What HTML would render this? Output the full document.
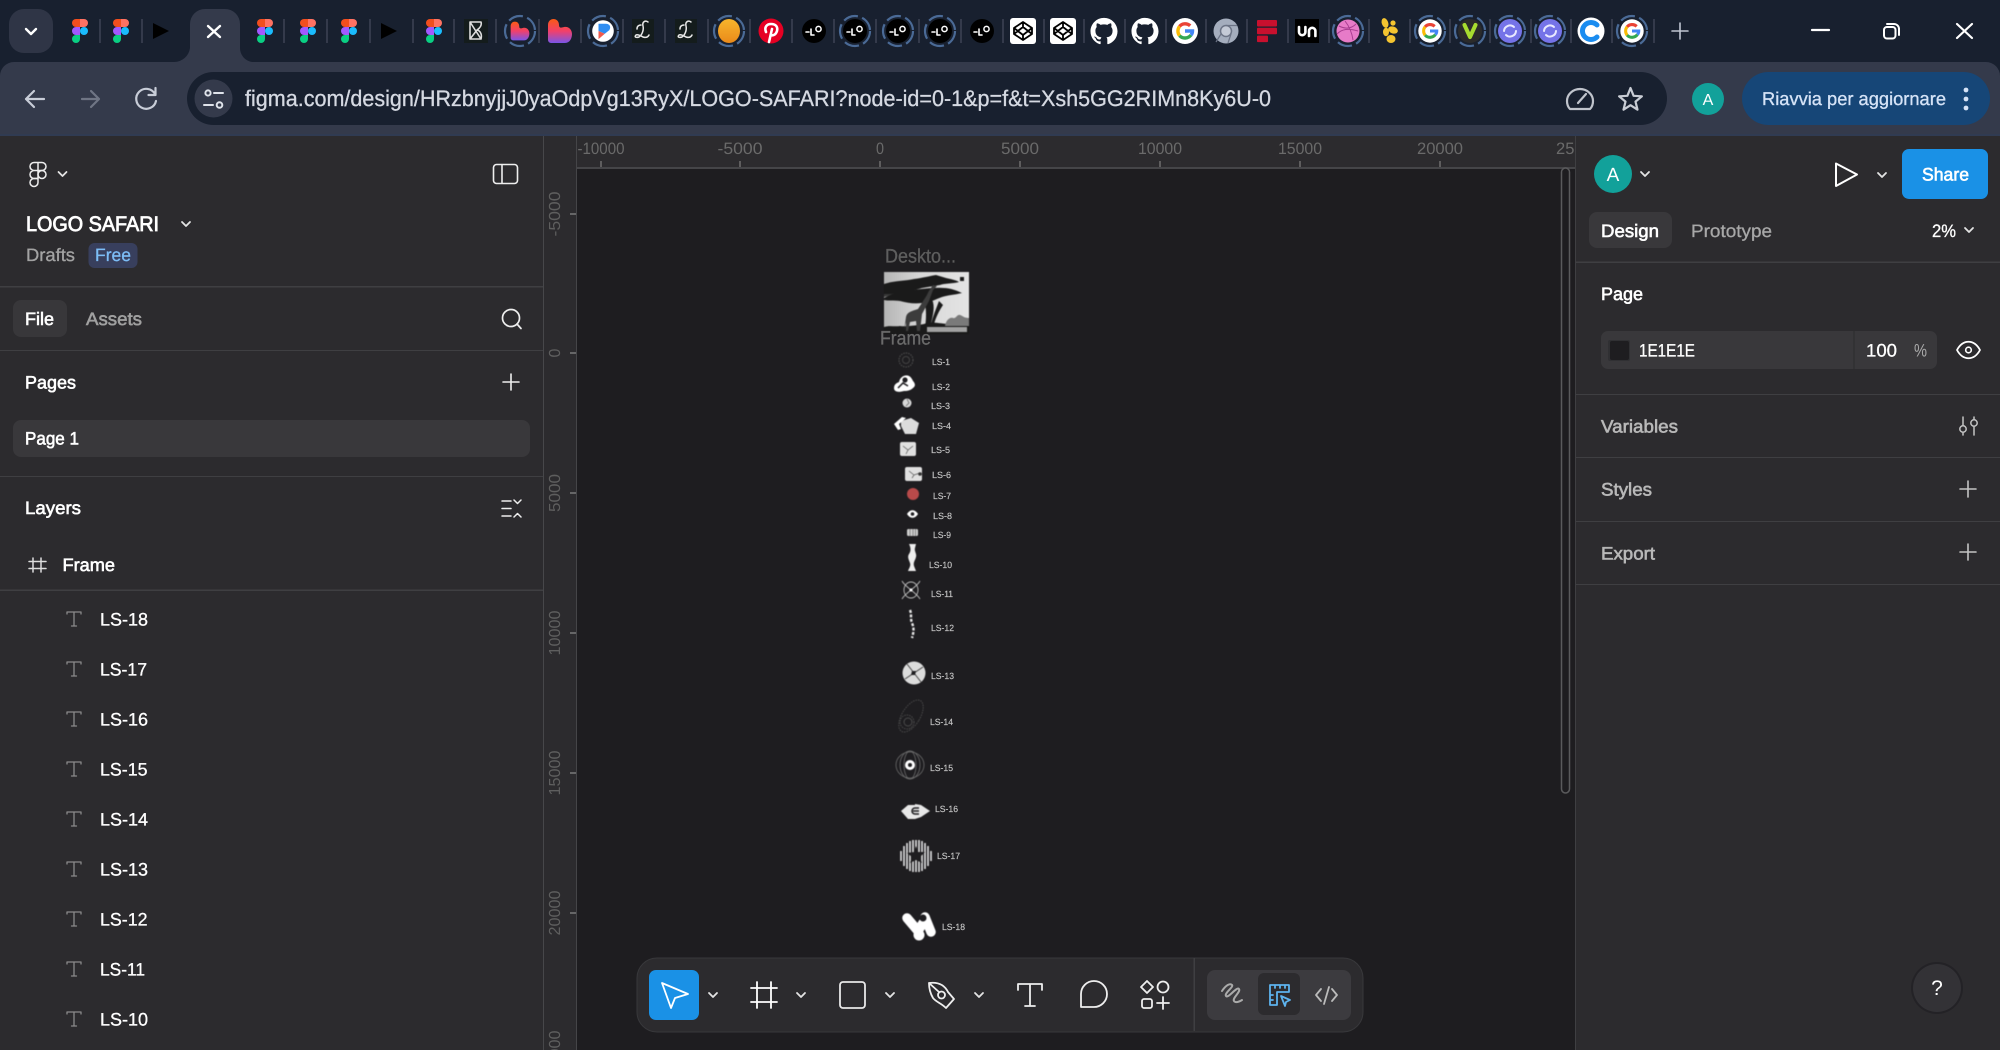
<!DOCTYPE html>
<html lang="en"><head><meta charset="utf-8"><title>LOGO SAFARI – Figma</title>
<style>
html,body{margin:0;padding:0;background:#1e1d20;width:2000px;height:1050px;overflow:hidden}
svg{display:block;font-family:"Liberation Sans",sans-serif;text-rendering:geometricPrecision}
.m{stroke:currentColor;stroke-width:.6px}
.n{stroke:currentColor;stroke-width:.3px}
.l{fill:none;stroke-linecap:round;stroke-linejoin:round}
.art{filter:blur(.45px)}
</style></head><body>
<svg xmlns="http://www.w3.org/2000/svg" width="2000" height="1050" viewBox="0 0 2000 1050">
<defs>
<linearGradient id="hg" x1="0" y1="0" x2="0" y2="1"><stop offset="0" stop-color="#fa5a14"/><stop offset=".5" stop-color="#f2406a"/><stop offset="1" stop-color="#7a55e8"/></linearGradient>
<linearGradient id="og" x1="0" y1="0" x2="0" y2="1"><stop offset="0" stop-color="#f7b52c"/><stop offset="1" stop-color="#ea8a1a"/></linearGradient>
<linearGradient id="ph" x1="0" y1="0" x2="1" y2="0"><stop offset="0" stop-color="#b5b5b5"/><stop offset=".45" stop-color="#d9d9d9"/><stop offset="1" stop-color="#e4e4e4"/></linearGradient>
<g id="fig"><path fill="#f24e1e" d="M0-12h-4a4 4 0 0 0 0 8h4z"/><path fill="#ff7262" d="M0-12h4a4 4 0 0 1 0 8H0z"/><path fill="#a259ff" d="M0-4h-4a4 4 0 0 0 0 8h4z"/><circle cx="4" fill="#1abcfe" r="4"/><path fill="#0acf83" d="M-4 4h4v4a4 4 0 1 1-4-4z"/></g>
<polygon id="play" points="-8,-8 8,0 -8,8" fill="#000"/>
<circle id="ring" r="15" fill="none" stroke="#4a6a96" stroke-width="2.2" stroke-dasharray="15 4.5"/>
<g id="bd"><rect x="-12" y="-12" width="24" height="24" fill="#141c1c"/><path class="l" stroke="#ddd" stroke-width="1.6" d="M-6-9H5c1 3-1 6-4 8 4 1 5 5 4 9H-6zM-6-9l11 17M-6 8L1-1"/></g>
<path id="heart" fill="url(#hg)" d="M-12 9V-6c0-8 11-8 11 0 0 3 2 3 5 2 5-1 8 3 8 7 0 4-2 9-7 9H-9a3 3 0 0 1-3-3z"/>
<g id="rb"><circle r="12" fill="#fff"/><path fill="#2e8df2" d="M-5-8h8c5 0 6 4 4 7L2 3l-7-3z"/><path fill="#ef5a4c" d="M-5 0l7 3-7 6z"/></g>
<g id="L"><rect x="-11" y="-12" width="22" height="24" fill="#141c1c"/><path class="l" stroke="#e8e8e8" stroke-width="1.500" d="M5-9c-3-2-6 0-5 4 1 4-1 9-4 11-3 1-5 0-3-2 2-1 5 1 7 2 3 1 5 0 6-2M-6-2c0-3 2-4 4-4"/></g>
<g id="pin"><circle r="12.500" fill="#e60023"/><path class="l" stroke="#fff" stroke-width="2.600" d="M-2 11l3-13M-5 1c-2-5 1-8 5-8 5 0 7 3 6 7-1 3-3 5-6 4"/></g>
<g id="lo"><circle r="12" fill="#000"/><path class="l" stroke="#fff" stroke-width="1.600" d="M-8 1h3M-3-2v6h3"/><circle cx="4.500" cy="-2" r="2.600" fill="none" stroke="#fff" stroke-width="1.500"/></g>
<g id="cp"><rect x="-13" y="-13" width="26" height="26" rx="3" fill="#fff"/><path class="l" stroke="#000" stroke-width="1.800" d="M0-9l9 6v6l-9 6-9-6v-6zM0-9v5M0 9V4M-9-3l9 7 9-7M-9 3l9-7 9 7"/></g>
<g id="gh"><path fill="#fff" transform="translate(-13.5 -13.5) scale(1.125)" d="M12 .297c-6.63 0-12 5.373-12 12 0 5.303 3.438 9.8 8.205 11.385.6.113.82-.258.82-.577 0-.285-.01-1.04-.015-2.04-3.338.724-4.042-1.61-4.042-1.61C4.422 18.07 3.633 17.7 3.633 17.7c-1.087-.744.084-.729.084-.729 1.205.084 1.838 1.236 1.838 1.236 1.07 1.835 2.809 1.305 3.495.998.108-.776.417-1.305.76-1.605-2.665-.3-5.466-1.332-5.466-5.93 0-1.31.465-2.38 1.235-3.22-.135-.303-.54-1.523.105-3.176 0 0 1.005-.322 3.3 1.23.96-.267 1.98-.399 3-.405 1.02.006 2.04.138 3 .405 2.28-1.552 3.285-1.23 3.285-1.23.645 1.653.24 2.873.12 3.176.765.84 1.23 1.91 1.23 3.22 0 4.61-2.805 5.625-5.475 5.92.42.36.81 1.096.81 2.22 0 1.606-.015 2.896-.015 3.286 0 .315.21.69.825.57C20.565 22.092 24 17.592 24 12.297c0-6.627-5.373-12-12-12"/></g>
<g id="g"><circle r="13" fill="#fff"/><g fill="none" stroke-width="3.400"><path stroke="#ea4335" d="M-5.500-4.600A7.500 7.500 0 0 1 5.200-5.200"/><path stroke="#fbbc05" d="M-5.500-4.600a7.500 7.500 0 0 0 0 9.200"/><path stroke="#34a853" d="M-5.500 4.600A7.500 7.500 0 0 0 6 4"/><path stroke="#4285f4" d="M6 4C7 3 7.500 1.500 7.500 0H0"/></g></g>
<g id="ch"><circle r="12.500" fill="#a4adbd"/><circle r="5.500" fill="#c4cad6" stroke="#6c7486" stroke-width="1.500"/><path stroke="#6c7486" stroke-width="1.200" fill="none" d="M0-5.500h11M-5 3l-5 8M5 3l-3 9"/></g>
<g id="fl" fill="#c8102e"><rect x="-10" y="-11" width="20" height="6.500" rx="1"/><rect x="-10" y="-3.200" width="20" height="6.500" rx="1"/><rect x="-10" y="4.600" width="11" height="6.500" rx="1"/></g>
<g id="un"><rect x="-12" y="-12" width="24" height="24" fill="#000"/><path class="l" stroke="#fff" stroke-width="2.600" d="M-8-4v5a3.200 3.200 0 0 0 6.400 0v-5M2 5v-5a3.200 3.200 0 0 1 6.400 0v5"/></g>
<g id="dr"><circle r="11.500" fill="#e77bc8"/><path fill="none" stroke="#a83d90" stroke-width="1" d="M-9-5c6 3 12 3 17-2M-3-10c4 5 7 12 8 19M-11 3c5-5 11-6 21-3"/></g>
<g id="ye" fill="#f4c430"><ellipse cx="-4" cy="-8" rx="3.200" ry="5" transform="rotate(-20 -4 -8)"/><ellipse cx="4" cy="-1" rx="5" ry="3.400" transform="rotate(20 4 -1)"/><ellipse cx="-3" cy="1" rx="3" ry="4.200"/><ellipse cx="2" cy="8" rx="4.500" ry="4"/><circle cx="4" cy="-8" r="2.600"/></g>
<g id="v"><circle r="12" fill="#2b2b2b"/><path class="l" stroke="#a7dc2f" stroke-width="4" d="M-5.500-6L0 6 5.500-6"/></g>
<g id="sy"><circle r="12" fill="#7573e8"/><path class="l" stroke="#e8e8ff" stroke-width="2" d="M-6 0a6 6 0 0 1 10-4M6 0a6 6 0 0 1-10 4"/></g>
<g id="cc"><circle r="13.500" fill="#fff"/><path class="l" stroke="#1a8cf0" stroke-width="5" d="M6-6a8.500 8.500 0 1 0 0 12"/></g>
<path id="chev" class="l" stroke="#e4e4e4" stroke-width="1.800" d="M-4-2l4 4 4-4"/>
<path id="tt" class="l" stroke="#8a8a8a" stroke-width="1.300" d="M-7-5v-2h14v2M0-7V7M-2.500 7h5"/>
<path id="pl" class="l" stroke-width="1.600" d="M-8 0H8M0-8V8"/>
</defs>

<!-- browser chrome -->
<rect width="2000" height="136" fill="#18202f"/>
<rect x="0" y="62" width="2000" height="90" rx="14" fill="#343a4b"/>
<rect x="9" y="9" width="44" height="44" rx="15" fill="#2f3546"/>
<path class="l" stroke="#fff" stroke-width="2.400" d="M26 29l5 5 5-5"/>
<path fill="#343a4b" d="M174 62a16 16 0 0 0 16-14V24a15 15 0 0 1 15-15h20a15 15 0 0 1 15 15v24a14 14 0 0 0 12 14z"/>
<path class="l" stroke="#fff" stroke-width="2.400" d="M208 26l12 11M220 26l-12 11"/>
<path stroke="#343a4b" stroke-width="2" fill="none" d="M100 19v24M142 19v24M284 19v24M327 19v24M370 19v24M413 19v24M454 19v24M496 19v24M539 19v24M581 19v24M623 19v24M665 19v24M708 19v24M750 19v24M792 19v24M834 19v24M876 19v24M919 19v24M961 19v24M1003 19v24M1044 19v24M1084 19v24M1125 19v24M1166 19v24M1206 19v24M1247 19v24M1288 19v24M1329 19v24M1369 19v24M1410 19v24M1450 19v24M1490 19v24M1531 19v24M1571 19v24M1612 19v24M1654 19v24"/>
<use href="#fig" x="80" y="31"/><use href="#fig" x="121" y="31"/><use href="#play" x="161" y="31"/>
<use href="#fig" x="265" y="31"/><use href="#fig" x="308" y="31"/><use href="#fig" x="349" y="31"/><use href="#play" x="389" y="31"/><use href="#fig" x="434" y="31"/>
<use href="#bd" x="476" y="31"/>
<g transform="translate(520 31) scale(.78)"><use href="#heart"/></g><use href="#ring" x="520" y="31"/>
<use href="#heart" x="560" y="31"/>
<g transform="translate(603 31) scale(.9)"><use href="#rb"/></g><use href="#ring" x="603" y="31"/>
<use href="#L" x="643" y="31"/><use href="#L" x="686" y="31"/>
<ellipse cx="729" cy="31" rx="11" ry="12" fill="url(#og)"/><use href="#ring" x="729" y="31"/>
<use href="#pin" x="771" y="31"/><use href="#lo" x="814" y="31"/>
<use href="#lo" x="855" y="31"/><use href="#ring" x="855" y="31"/>
<use href="#lo" x="898" y="31"/><use href="#ring" x="898" y="31"/>
<use href="#lo" x="940" y="31"/><use href="#ring" x="940" y="31"/>
<use href="#lo" x="982" y="31"/><use href="#cp" x="1023" y="31"/><use href="#cp" x="1063" y="31"/>
<use href="#gh" x="1104" y="31"/><use href="#gh" x="1145" y="31"/><use href="#g" x="1185" y="31"/><use href="#ch" x="1226" y="31"/>
<use href="#fl" x="1267" y="31"/><use href="#un" x="1307" y="31"/>
<use href="#dr" x="1348" y="31"/><use href="#ring" x="1348" y="31"/>
<use href="#ye" x="1389" y="31"/>
<g transform="translate(1430 31) scale(.9)"><use href="#g"/></g><use href="#ring" x="1430" y="31"/>
<use href="#v" x="1470" y="31"/><use href="#ring" x="1470" y="31"/>
<use href="#sy" x="1510" y="31"/><use href="#ring" x="1510" y="31"/>
<use href="#sy" x="1550" y="31"/><use href="#ring" x="1550" y="31"/>
<use href="#cc" x="1591" y="31"/>
<g transform="translate(1632 31) scale(.9)"><use href="#g"/></g><use href="#ring" x="1632" y="31"/>
<use href="#pl" x="1680" y="31" stroke="#c0c6d2"/>
<path class="l" stroke="#fff" stroke-width="2.200" d="M1812 30h17"/>
<g class="l" stroke="#fff" stroke-width="2"><rect x="1884" y="27" width="11.500" height="11.500" rx="3"/><path d="M1887 24h7a5 5 0 0 1 5 5v6"/></g>
<path class="l" stroke="#fff" stroke-width="2.200" d="M1957 24l15 14M1972 24l-15 14"/>

<path class="l" stroke="#c8cdd8" stroke-width="2.200" d="M44 99H26M34 91l-8 8 8 8"/>
<path class="l" stroke="#6f7584" stroke-width="2.200" d="M82 99h17M91 91l8 8-8 8"/>
<path class="l" stroke="#c8cdd8" stroke-width="2.200" d="M155 94a10 10 0 1 0 1 7M155.500 88v7h-7"/>
<rect x="187" y="72" width="1480" height="53" rx="26.500" fill="#18202f"/>
<circle cx="213.500" cy="98.500" r="19" fill="#343a4b"/>
<g class="l" stroke="#dfe3ea" stroke-width="2"><circle cx="208" cy="93" r="2.600"/><path d="M214 93h9M204 105h9"/><circle cx="219.500" cy="105" r="2.800"/></g>
<text x="245" y="106" font-size="22.500" fill="#d5d9e2" class="n" style="color:#d5d9e2" textLength="1026" lengthAdjust="spacingAndGlyphs">figma.com/design/HRzbnyjjJ0yaOdpVg13RyX/LOGO-SAFARI?node-id=0-1&amp;p=f&amp;t=Xsh5GG2RIMn8Ky6U-0</text>
<path class="l" stroke="#c0c4cc" stroke-width="2.200" d="M1570 109c-2-2-3-5-3-8a13 12 0 0 1 26 0c0 3-1 6-3 8zM1578 103l8-9"/>
<polygon class="l" stroke="#c8ccd4" stroke-width="2.200" points="1630.500,88 1633.600,95.800 1641.900,96.300 1635.500,101.600 1637.500,109.700 1630.500,105.200 1623.500,109.700 1625.500,101.600 1619.100,96.300 1627.400,95.800"/>
<circle cx="1708" cy="99" r="16" fill="#12a19a"/>
<text x="1708" y="105" font-size="16" fill="#fff" text-anchor="middle">A</text>
<rect x="1742" y="72" width="248" height="53" rx="26.500" fill="#164677"/>
<text x="1762" y="105" font-size="18.500" fill="#d5e3f7" class="n" style="color:#d5e3f7" textLength="184" lengthAdjust="spacingAndGlyphs">Riavvia per aggiornare</text>
<g fill="#d5e3f7"><circle cx="1966" cy="90" r="2.400"/><circle cx="1966" cy="99" r="2.400"/><circle cx="1966" cy="108" r="2.400"/></g>

<!-- canvas -->
<rect x="0" y="136" width="2000" height="914" fill="#1e1d20"/>
<rect x="0" y="134" width="2000" height="2" fill="#303b52"/>

<!-- horizontal ruler -->
<rect x="543" y="136" width="1033" height="32" fill="#2c2b2e"/>
<rect x="577" y="167" width="999" height="2" fill="#454548"/>
<g font-size="16.500" fill="#6a6a6a" text-anchor="middle">
<text x="601" y="154" textLength="47" lengthAdjust="spacingAndGlyphs">-10000</text>
<text x="740" y="154" textLength="45" lengthAdjust="spacingAndGlyphs">-5000</text>
<text x="880" y="154" textLength="8" lengthAdjust="spacingAndGlyphs">0</text>
<text x="1020" y="154" textLength="38" lengthAdjust="spacingAndGlyphs">5000</text>
<text x="1160" y="154" textLength="44" lengthAdjust="spacingAndGlyphs">10000</text>
<text x="1300" y="154" textLength="44" lengthAdjust="spacingAndGlyphs">15000</text>
<text x="1440" y="154" textLength="46" lengthAdjust="spacingAndGlyphs">20000</text>
<text x="1579" y="154" textLength="46" lengthAdjust="spacingAndGlyphs">25000</text>
</g>
<path stroke="#6e6e6e" stroke-width="1.500" fill="none" d="M601 161v6M740 161v6M880 161v6M1020 161v6M1160 161v6M1300 161v6M1440 161v6"/>
<!-- scrollbar -->
<rect x="1561.500" y="168" width="8" height="625" rx="4" fill="#1e1d20" stroke="#5a5a5c" stroke-width="1.500"/>

<!-- vertical ruler -->
<rect x="543" y="136" width="34" height="914" fill="#2c2b2e"/>
<rect x="576" y="136" width="1" height="914" fill="#454548"/>
<rect x="543" y="136" width="1" height="914" fill="#47474a"/>
<g font-size="16" fill="#5e5e5e" text-anchor="middle">
<text transform="translate(560 214) rotate(-90)" textLength="45" lengthAdjust="spacingAndGlyphs">-5000</text>
<text transform="translate(560 353) rotate(-90)">0</text>
<text transform="translate(560 493) rotate(-90)" textLength="38" lengthAdjust="spacingAndGlyphs">5000</text>
<text transform="translate(560 633) rotate(-90)" textLength="45" lengthAdjust="spacingAndGlyphs">10000</text>
<text transform="translate(560 773) rotate(-90)" textLength="45" lengthAdjust="spacingAndGlyphs">15000</text>
<text transform="translate(560 913) rotate(-90)" textLength="45" lengthAdjust="spacingAndGlyphs">20000</text>
<text transform="translate(560 1053) rotate(-90)" textLength="45" lengthAdjust="spacingAndGlyphs">25000</text>
</g>
<path stroke="#7a7a7a" stroke-width="1.500" fill="none" d="M570 214h6M570 353h6M570 493h6M570 633h6M570 773h6M570 913h6"/>

<!-- left panel -->
<rect x="0" y="136" width="543" height="914" fill="#2c2b2e"/>
<g fill="#3f3f42"><rect y="286" width="543" height="1.500"/><rect y="350" width="543" height="1"/><rect y="476" width="543" height="1"/><rect y="589.500" width="543" height="1.500"/></g>
<g class="l" stroke="#eee" stroke-width="1.500" transform="translate(38 174.500)"><path d="M0-12h-4a4 4 0 0 0 0 8h4zM0-12h4a4 4 0 0 1 0 8H0zM0-4h-4a4 4 0 0 0 0 8h4z"/><circle cx="4" r="4"/><path d="M-4 4h4v4a4 4 0 1 1-4-4z"/></g>
<use href="#chev" x="62.500" y="174"/>
<g class="l" stroke="#eee" stroke-width="1.600"><rect x="493.500" y="164.500" width="24" height="19" rx="3"/><path d="M502 165v18"/></g>
<text x="26" y="231" font-size="21" fill="#fff" class="m" textLength="133" lengthAdjust="spacingAndGlyphs" style="color:#fff;stroke-width:.8px">LOGO SAFARI</text>
<use href="#chev" x="186" y="224"/>
<text x="26" y="261" font-size="18" fill="#a3a3a3" class="n" style="color:#a3a3a3" textLength="49" lengthAdjust="spacingAndGlyphs">Drafts</text>
<rect x="88.500" y="243" width="49" height="25" rx="6" fill="#383f5d"/>
<text x="95" y="261" font-size="18" fill="#7dbdf6" class="n" style="color:#7dbdf6" textLength="36" lengthAdjust="spacingAndGlyphs">Free</text>
<rect x="13" y="300" width="54" height="37" rx="8" fill="#38373a"/>
<text x="25" y="325" font-size="18" fill="#fff" class="m" textLength="29" lengthAdjust="spacingAndGlyphs" style="color:#fff">File</text>
<text x="86" y="325" font-size="18" fill="#a0a0a0" class="m" textLength="56" lengthAdjust="spacingAndGlyphs" style="color:#a0a0a0">Assets</text>
<g class="l" stroke="#eee" stroke-width="1.700"><circle cx="511" cy="318" r="8.500"/><path d="M517 324l4 4.500"/></g>
<text x="25" y="388.500" font-size="18" fill="#fff" class="m" textLength="51" lengthAdjust="spacingAndGlyphs" style="color:#fff">Pages</text>
<use href="#pl" x="511" y="382" stroke="#eee"/>
<rect x="13" y="420" width="517" height="37" rx="8" fill="#39383b"/>
<text x="25" y="444.500" font-size="18" fill="#fff" class="m" textLength="54" lengthAdjust="spacingAndGlyphs" style="color:#fff">Page 1</text>
<text x="25" y="514" font-size="18" fill="#fff" class="m" textLength="56" lengthAdjust="spacingAndGlyphs" style="color:#fff">Layers</text>
<path class="l" stroke="#eee" stroke-width="1.500" d="M502 501h9M502 508.500h9M502 516h9M514 500l3.500 3.500 3.500-3.500M514 517l3.500-3.500 3.500 3.500"/>
<path class="l" stroke="#ddd" stroke-width="1.500" d="M33 558v14M41 558v14M29 561.500h17M29 568.500h17"/>
<text x="62.500" y="571" font-size="18" fill="#fff" class="m" textLength="52.500" lengthAdjust="spacingAndGlyphs" style="color:#fff">Frame</text>
<g font-size="18" fill="#fff" class="n" style="color:#fff">
<use href="#tt" x="74" y="619"/><text x="100" y="625.500" textLength="48" lengthAdjust="spacingAndGlyphs">LS-18</text>
<use href="#tt" x="74" y="669"/><text x="100" y="675.500" textLength="47" lengthAdjust="spacingAndGlyphs">LS-17</text>
<use href="#tt" x="74" y="719"/><text x="100" y="725.500" textLength="48" lengthAdjust="spacingAndGlyphs">LS-16</text>
<use href="#tt" x="74" y="769"/><text x="100" y="775.500" textLength="47.500" lengthAdjust="spacingAndGlyphs">LS-15</text>
<use href="#tt" x="74" y="819"/><text x="100" y="825.500" textLength="48" lengthAdjust="spacingAndGlyphs">LS-14</text>
<use href="#tt" x="74" y="869"/><text x="100" y="875.500" textLength="48" lengthAdjust="spacingAndGlyphs">LS-13</text>
<use href="#tt" x="74" y="919"/><text x="100" y="925.500" textLength="47.500" lengthAdjust="spacingAndGlyphs">LS-12</text>
<use href="#tt" x="74" y="969"/><text x="100" y="975.500" textLength="45" lengthAdjust="spacingAndGlyphs">LS-11</text>
<use href="#tt" x="74" y="1019"/><text x="100" y="1025.500" textLength="48" lengthAdjust="spacingAndGlyphs">LS-10</text>
</g>

<!-- canvas art -->
<text x="885" y="262.500" font-size="19.500" fill="#5e5e5e" class="n" style="color:#5e5e5e" textLength="71" lengthAdjust="spacingAndGlyphs">Deskto...</text>
<g class="art">
<rect x="884" y="272" width="85" height="62" fill="url(#ph)"/>
<g fill="#1a1a1a">
<path d="M884 284c8-3 20-3 30-5 8-1 16-3 22-4l10 3c4 1 10 2 13 4-7 2-14 1-19 3-6 1-12 2-18 3-10 3-30 7-38 6z"/>
<path d="M884 298c6-3 14-7 26-8 12-1 26-3 34-2 6 0 14 3 18 5-8 2-14 2-20 4-6 2-12 6-20 6-8 1-14 0-22-2-6-1-12 0-16-1z"/>
<path d="M884 290c8-3 14-3 20-2l-6 6-14 3z" opacity=".8"/>
<path d="M924 300l7-2 2 4c2 8-1 16-3 26h-5c1-8 2-18-1-28zM939 301c-3 8-6 15-8 23h3c2-7 5-13 9-19z"/>
<path d="M884 327c6-2 10 0 16-1 6 1 18-1 24-2 8-4 16 1 45 1v9H884z"/>
<rect x="960" y="277" width="4" height="4"/>
</g>
<path fill="#7a7a7a" d="M945 326c1-6 5-9 8-8s4-4 7-3 4 3 9 3v8z"/>
<path fill="#3c3c3c" d="M904 331l2-14c1-5 6-6 12-8l9-14c1-3 4-7 6-10l4 1-4 4-4 11-7 13-2 17h-3l-1-10-6 1-2 9h-2l0-9-2 9z"/>
<rect x="927" y="327" width="40" height="5" fill="#cfcfcf" opacity=".75"/>
</g>
<text x="880" y="344.500" font-size="19.500" fill="#6a6a6a" class="n" style="color:#6a6a6a" textLength="51" lengthAdjust="spacingAndGlyphs">Frame</text>
<g font-size="9" fill="#c4c4c4" class="n" style="color:#c4c4c4;stroke-width:.15px">
<text x="932" y="365" textLength="18" lengthAdjust="spacingAndGlyphs">LS-1</text>
<text x="932" y="390" textLength="18" lengthAdjust="spacingAndGlyphs">LS-2</text>
<text x="931" y="409" textLength="19" lengthAdjust="spacingAndGlyphs">LS-3</text>
<text x="932" y="429" textLength="19" lengthAdjust="spacingAndGlyphs">LS-4</text>
<text x="931" y="453" textLength="19" lengthAdjust="spacingAndGlyphs">LS-5</text>
<text x="932" y="478" textLength="19" lengthAdjust="spacingAndGlyphs">LS-6</text>
<text x="933" y="499" textLength="18" lengthAdjust="spacingAndGlyphs">LS-7</text>
<text x="933" y="519" textLength="19" lengthAdjust="spacingAndGlyphs">LS-8</text>
<text x="933" y="538" textLength="18" lengthAdjust="spacingAndGlyphs">LS-9</text>
<text x="929" y="568" textLength="23" lengthAdjust="spacingAndGlyphs">LS-10</text>
<text x="931" y="597" textLength="22" lengthAdjust="spacingAndGlyphs">LS-11</text>
<text x="931" y="631" textLength="23" lengthAdjust="spacingAndGlyphs">LS-12</text>
<text x="931" y="679" textLength="23" lengthAdjust="spacingAndGlyphs">LS-13</text>
<text x="930" y="725" textLength="23" lengthAdjust="spacingAndGlyphs">LS-14</text>
<text x="930" y="771" textLength="23" lengthAdjust="spacingAndGlyphs">LS-15</text>
<text x="935" y="812" textLength="23" lengthAdjust="spacingAndGlyphs">LS-16</text>
<text x="937" y="859" textLength="23" lengthAdjust="spacingAndGlyphs">LS-17</text>
<text x="942" y="930" textLength="23" lengthAdjust="spacingAndGlyphs">LS-18</text>
</g>
<!-- logos -->
<g class="art">
<circle cx="906" cy="360" r="7" fill="none" stroke="#4a4a4a" stroke-width="1.200" stroke-dasharray="1.500 1"/><circle cx="906" cy="360" r="3.500" fill="none" stroke="#444" stroke-width="1"/>
<path fill="#fff" d="M894 388c0-4 3-5 5-6 1-5 6-8 10-6 2 1 3 3 4 5 2 2 3 5 0 7-3 3-7 3-9 3-3 1-10 2-10-3z"/><circle cx="905" cy="380" r="2.600" fill="#1e1d20"/><path d="M898 388l5-5 5 3" fill="none" stroke="#1e1d20" stroke-width="1.500"/>
<circle cx="907" cy="403" r="4.500" fill="#d8d8d8"/><path d="M907 399l2 4-3 3" fill="none" stroke="#666" stroke-width=".8"/>
<path fill="#dcdcdc" d="M901 421l10-3 8 5-3 11-11 0-4-8z"/><path fill="#fff" d="M894 424l8-7 4 1-7 6 2 5-3 1z"/>
<rect x="900" y="442" width="16" height="14" rx="2" fill="#e0e0e0"/><path d="M903 446l5 4 5-4M908 450l-2 4" stroke="#555" stroke-width=".7" fill="none"/>
<rect x="905" y="467" width="17" height="14" rx="2" fill="#e0e0e0"/><path d="M909 471l5 4 6-2M914 475l-2 3" stroke="#555" stroke-width=".7" fill="none"/><circle cx="920" cy="474" r="1.800" fill="#333"/>
<circle cx="913" cy="494" r="6" fill="#b84a4a"/>
<path fill="#fff" d="M907 514c3-5 8-5 11 0-3 5-8 5-11 0z"/><circle cx="912.500" cy="514" r="1.800" fill="#1e1d20"/>
<rect x="907" y="529" width="11" height="7" rx="1.500" fill="#cfcfcf"/><path d="M910 529v7M913 529v7M915.500 529v7" stroke="#777" stroke-width=".8"/>
<path fill="#eee" d="M910 544h6l-1 4c-1 3 2 6 1 9-1 4-3 5-2 9l2 5h-8c1-3 3-5 2-8s-3-6-1-9 2-6 0-10z"/>
<g fill="none" stroke="#bdbdbd" stroke-width=".9"><path d="M902 581c3 6 15 12 18 18M920 581c-3 6-15 12-18 18"/><ellipse cx="911" cy="590" rx="7" ry="8"/></g><circle cx="911" cy="590" r="1.500" fill="#fff"/>
<path fill="none" stroke="#e8e8e8" stroke-width="2.400" stroke-dasharray="3 1.500" d="M910 610c2 5 0 8 2 13s2 8 0 15"/>
<circle cx="914" cy="673" r="11.500" fill="#dcdcdc"/><path stroke="#444" stroke-width="1" d="M907 664l14 18M923 667l-18 12" fill="none"/><path d="M912 671l4 0-1 4-4 0z" fill="#1e1d20"/>
<g fill="none" stroke="#4b4b4b" stroke-width="1"><ellipse cx="911" cy="716" rx="9" ry="18" transform="rotate(32 911 716)" stroke-dasharray="1.500 1"/><circle cx="907" cy="722" r="7" stroke-dasharray="1.500 1"/><circle cx="908" cy="722" r="4"/></g>
<g fill="none" stroke="#6b6b6b" stroke-width=".8"><ellipse cx="910" cy="765" rx="14" ry="13"/><ellipse cx="910" cy="765" rx="10" ry="14"/><ellipse cx="910" cy="765" rx="6" ry="14"/></g><circle cx="910" cy="765" r="5" fill="#fff"/><circle cx="910" cy="765" r="2" fill="#1e1d20"/>
<path fill="#e8e8e8" d="M901 811l7-6 7 0v14l-7 0zM915 804l6 1 9 6-9 6-6 2z"/><path fill="none" stroke="#1e1d20" stroke-width="1.500" d="M919 808h-4a3 3 0 0 0 0 6h4M913 811h6"/>
<g stroke="#e4e4e4" stroke-width="1.600"><path d="M901 851v10M904 846v20M907 843v26M910 841v30M913 840v32M916 840v32M919 840v32M922 841v30M925 843v26M928 846v20M931 851v10"/></g><path d="M916 846l2 6 7 0-5 5 2 6-6-3-6 3 2-6-5-4 7-1z" fill="#1e1d20"/>
<g class="l" stroke="#fff" stroke-width="9.500"><path d="M907 918l11 13 5-8M925 917l6 15"/></g><circle cx="919" cy="935" r="5.500" fill="#fff"/><circle cx="923" cy="918" r="3.500" fill="#1e1d20"/>
</g>

<!-- right panel -->
<rect x="1576" y="136" width="424" height="914" fill="#2c2b2e"/>
<rect x="1575" y="136" width="1" height="914" fill="#3f3f42"/>
<g fill="#3f3f42"><rect x="1576" y="261.500" width="424" height="1.500"/><rect x="1576" y="394" width="424" height="1"/><rect x="1576" y="457" width="424" height="1"/><rect x="1576" y="521" width="424" height="1"/><rect x="1576" y="584" width="424" height="1"/></g>
<circle cx="1613" cy="174" r="19" fill="#12a19a"/>
<text x="1613" y="181" font-size="19" fill="#fff" text-anchor="middle">A</text>
<use href="#chev" x="1645" y="174"/>
<path class="l" stroke="#fff" stroke-width="2" d="M1836 163.500v22.500l21-11.500z"/>
<use href="#chev" x="1882" y="175"/>
<rect x="1902" y="149" width="86" height="50" rx="7" fill="#1a91e6"/>
<text x="1922" y="180.500" font-size="18" fill="#fff" class="m" textLength="47" lengthAdjust="spacingAndGlyphs" style="color:#fff">Share</text>
<rect x="1589" y="212" width="83" height="36" rx="8" fill="#39383b"/>
<text x="1601" y="237" font-size="18" fill="#fff" class="m" textLength="58" lengthAdjust="spacingAndGlyphs" style="color:#fff">Design</text>
<text x="1691" y="237" font-size="18" fill="#a8a8a8" class="n" style="color:#a8a8a8" textLength="81" lengthAdjust="spacingAndGlyphs">Prototype</text>
<text x="1932" y="237" font-size="18" fill="#fff" class="n" style="color:#fff" textLength="24" lengthAdjust="spacingAndGlyphs">2%</text>
<use href="#chev" x="1969" y="230"/>
<text x="1601" y="300" font-size="18" fill="#fff" class="m" textLength="42" lengthAdjust="spacingAndGlyphs" style="color:#fff">Page</text>
<rect x="1601" y="331" width="336" height="38" rx="7" fill="#39383b"/>
<rect x="1853.500" y="331" width="1" height="38" fill="#2c2b2e"/>
<rect x="1608" y="340" width="22" height="21" rx="2" fill="#303033"/>
<rect x="1610" y="341" width="19" height="19" rx="2" fill="#1e1d20"/>
<text x="1639" y="356.500" font-size="18" fill="#fff" class="n" style="color:#fff" textLength="56" lengthAdjust="spacingAndGlyphs">1E1E1E</text>
<text x="1866" y="356.500" font-size="18" fill="#fff" class="n" style="color:#fff" textLength="31" lengthAdjust="spacingAndGlyphs">100</text>
<text x="1914" y="356.500" font-size="18" fill="#aaa" textLength="13" lengthAdjust="spacingAndGlyphs">%</text>
<path class="l" stroke="#fff" stroke-width="1.800" d="M1957 350c6-11 17-11 23 0-6 11-17 11-23 0z"/><circle cx="1968.500" cy="350" r="2.800" fill="none" stroke="#fff" stroke-width="1.600"/>
<text x="1601" y="432.500" font-size="18" fill="#b8b8b8" class="m" textLength="77" lengthAdjust="spacingAndGlyphs" style="color:#b8b8b8">Variables</text>
<g class="l" stroke="#c4c4c4" stroke-width="1.500"><path d="M1963 417v8M1963 433v2M1974 417v2M1974 427v8"/><circle cx="1963" cy="429" r="3.200"/><circle cx="1974" cy="423" r="3.200"/></g>
<text x="1601" y="495.500" font-size="18" fill="#b8b8b8" class="m" textLength="51" lengthAdjust="spacingAndGlyphs" style="color:#b8b8b8">Styles</text>
<use href="#pl" x="1968" y="489" stroke="#c4c4c4"/>
<text x="1601" y="559.500" font-size="18" fill="#b8b8b8" class="m" textLength="54" lengthAdjust="spacingAndGlyphs" style="color:#b8b8b8">Export</text>
<use href="#pl" x="1968" y="552" stroke="#c4c4c4"/>

<!-- bottom toolbar -->
<rect x="637" y="958" width="726" height="74" rx="20" fill="#2c2b2e" stroke="#38383b" stroke-width="1"/>
<rect x="649" y="970" width="50" height="50" rx="7" fill="#1a91e6"/>
<path class="l" stroke="#fff" stroke-width="1.800" d="M662 983l26 11-13 4-4 10z"/>
<use href="#chev" x="713" y="995"/>
<path class="l" stroke="#fff" stroke-width="1.800" d="M757 982v26M771 982v26M751 988h26M751 1002h26"/>
<use href="#chev" x="801" y="995"/>
<rect x="840" y="982" width="25" height="26" rx="3" fill="none" stroke="#e8e8e8" stroke-width="1.800"/>
<use href="#chev" x="890" y="995"/>
<g class="l" stroke="#eee" stroke-width="1.800"><path d="M929 983c8-1 15 1 19 9l6 7-8 9c-5-5-10-6-13-10-3-5-4-10-4-15zM929 983l10 9"/><circle cx="941.500" cy="995" r="3.500"/></g>
<use href="#chev" x="979" y="995"/>
<path class="l" stroke="#eee" stroke-width="1.800" d="M1018 990v-6h24v6M1030 984v22M1025 1006h10"/>
<path class="l" stroke="#eee" stroke-width="1.800" d="M1081 1007V994a13 13 0 1 1 13 13z"/>
<g class="l" stroke="#eee" stroke-width="1.800"><path d="M1147 981l6 6-6 6-6-6z"/><circle cx="1163" cy="987" r="5.500"/><rect x="1142" y="999" width="10" height="9" rx="2"/><path d="M1163 997v12M1157 1003h12"/></g>
<rect x="1193.500" y="958" width="1.500" height="73" fill="#3f3f42"/>
<rect x="1207" y="970" width="144" height="50" rx="8" fill="#3c3b3f"/>
<rect x="1258" y="973" width="42" height="42" rx="6" fill="#2c2b2e"/>
<path class="l" stroke="#aaa" stroke-width="2" d="M1222 991c4-6 8-8 10-6s-8 8-6 11 11-10 13-7-7 9-5 12 8-1 8-1"/>
<g class="l" stroke="#5db3ee" stroke-width="1.800"><path d="M1270 985h19v7h-12v13h-7zM1275 985v3M1280 985v3M1285 985v3M1270 995h3M1270 1000h3"/><path d="M1281 996l9 4-4 2-1 4z"/></g>
<path class="l" stroke="#bbb" stroke-width="1.800" d="M1321 989l-5 6 5 6M1332 989l5 6-5 6M1329 987l-5 17"/>

<!-- help -->
<circle cx="1937" cy="988" r="26" fill="#232226"/>
<circle cx="1937" cy="988" r="24" fill="#333236"/>
<text x="1937" y="995" font-size="21" fill="#fff" text-anchor="middle">?</text>
</svg>
</body></html>
